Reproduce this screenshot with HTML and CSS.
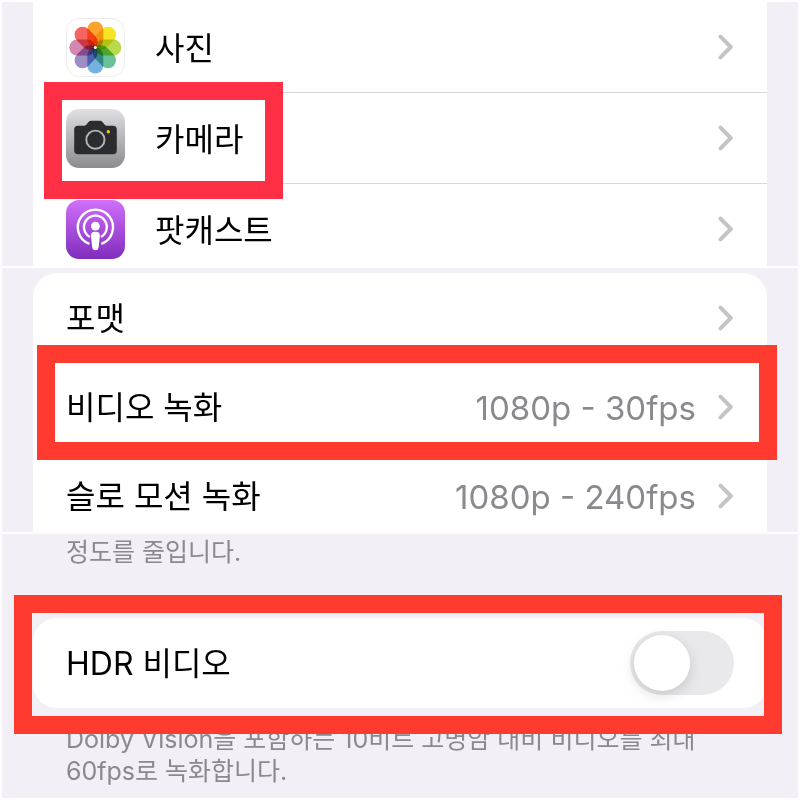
FILE: index.html
```html
<!DOCTYPE html>
<html lang="ko">

<head>
    <meta charset="UTF-8">
    <meta name="viewport" content="width=device-width, initial-scale=1.0">
    <title>카메라 설정</title>
    <link rel="stylesheet" href="styles.css">
</head>

<body>
    <!-- app list -->
    <section class="panel">
        <nav class="card apps">
            <a class="row" href="#photos">
                <svg class="app-icon" viewBox="0 0 59 59" aria-hidden="true">
                    <rect x="0.5" y="0.5" width="58" height="58" rx="13" fill="#fff" stroke="#ececee" />
                    <g class="petals" transform="translate(29.3 29.5)">
                        <rect x="-8" y="-26" width="16" height="26" rx="8" fill="#faa22e" />
                        <rect x="-8" y="-26" width="16" height="26" rx="8" fill="#f6e524" transform="rotate(45)" />
                        <rect x="-8" y="-26" width="16" height="26" rx="8" fill="#b8d94c" transform="rotate(90)" />
                        <rect x="-8" y="-26" width="16" height="26" rx="8" fill="#6bc297" transform="rotate(135)" />
                        <rect x="-8" y="-26" width="16" height="26" rx="8" fill="#74b2e0" transform="rotate(180)" />
                        <rect x="-8" y="-26" width="16" height="26" rx="8" fill="#9f8dc8" transform="rotate(225)" />
                        <rect x="-8" y="-26" width="16" height="26" rx="8" fill="#d587b1" transform="rotate(270)" />
                        <rect x="-8" y="-26" width="16" height="26" rx="8" fill="#f6665f" transform="rotate(315)" />
                    </g>
                    <circle cx="29.3" cy="29.5" r="1.5" fill="#fff" />
                </svg>
                <span class="row-body">
                    <span class="label">사진</span>
                    <svg class="chevron" viewBox="0 0 16 26" aria-hidden="true"><path d="M2.5 2.6 L12.8 13 L2.5 23.4" /></svg>
                </span>
            </a>
            <a class="row" href="#camera">
                <svg class="app-icon" viewBox="0 0 59 59" aria-hidden="true">
                    <defs>
                        <linearGradient id="silver" x1="0" y1="0" x2="0" y2="1">
                            <stop offset="0" stop-color="#e0dfe4" />
                            <stop offset="1" stop-color="#8c8b90" />
                        </linearGradient>
                    </defs>
                    <rect width="59" height="59" rx="13" fill="url(#silver)" />
                    <path d="M12 16.7 H18 Q19.5 16.7 20.5 15.5 L22.5 13 Q23.5 11.8 25 11.8 H34 Q35.5 11.8 36.5 13 L38.5 15.5 Q39.5 16.7 41 16.7 H47 Q50.8 16.7 50.8 20.5 V41.5 Q50.8 45.3 47 45.3 H12 Q8.2 45.3 8.2 41.5 V20.5 Q8.2 16.7 12 16.7 Z" fill="#2b2c2e" />
                    <circle cx="29.4" cy="30.7" r="9.1" fill="none" stroke="#b5b4b8" stroke-width="1.9" />
                    <circle cx="42.3" cy="22.8" r="1.7" fill="#fcc712" />
                </svg>
                <span class="row-body">
                    <span class="label">카메라</span>
                    <svg class="chevron" viewBox="0 0 16 26" aria-hidden="true"><path d="M2.5 2.6 L12.8 13 L2.5 23.4" /></svg>
                </span>
                <span class="mark mark-camera"></span>
            </a>
            <a class="row" href="#podcasts">
                <svg class="app-icon" viewBox="0 0 59 59" aria-hidden="true">
                    <defs>
                        <linearGradient id="purple" x1="0" y1="0" x2="0" y2="1">
                            <stop offset="0" stop-color="#d070fb" />
                            <stop offset="1" stop-color="#802cbd" />
                        </linearGradient>
                    </defs>
                    <rect width="59" height="59" rx="13" fill="url(#purple)" />
                    <g fill="none" stroke="#fff" stroke-width="2.4">
                        <path d="M23.4 43.8 A17.6 17.6 0 1 1 35.4 43.8" />
                        <path d="M23.8 37 A11.4 11.4 0 1 1 35 37" />
                    </g>
                    <circle cx="29.4" cy="26.1" r="4.4" fill="#fff" />
                    <path d="M29.4 31.8 C32.6 31.8 34 33.2 33.9 35.6 L32.7 46.5 C32.4 49.3 31.4 50.3 29.4 50.3 C27.4 50.3 26.4 49.3 26.1 46.5 L24.9 35.6 C24.8 33.2 26.2 31.8 29.4 31.8 Z" fill="#fff" />
                </svg>
                <span class="row-body">
                    <span class="label">팟캐스트</span>
                    <svg class="chevron" viewBox="0 0 16 26" aria-hidden="true"><path d="M2.5 2.6 L12.8 13 L2.5 23.4" /></svg>
                </span>
            </a>
        </nav>
    </section>

    <!-- recording formats -->
    <section class="panel">
        <nav class="card formats">
            <a class="row" href="#format">
                <span class="row-body">
                    <span class="label">포맷</span>
                    <svg class="chevron" viewBox="0 0 16 26" aria-hidden="true"><path d="M2.5 2.6 L12.8 13 L2.5 23.4" /></svg>
                </span>
            </a>
            <a class="row" href="#video">
                <span class="row-body">
                    <span class="label">비디오 녹화</span>
                    <span class="value">1080p - 30fps</span>
                    <svg class="chevron" viewBox="0 0 16 26" aria-hidden="true"><path d="M2.5 2.6 L12.8 13 L2.5 23.4" /></svg>
                </span>
                <span class="mark mark-video"></span>
            </a>
            <a class="row" href="#slomo">
                <span class="row-body">
                    <span class="label">슬로 모션 녹화</span>
                    <span class="value">1080p - 240fps</span>
                    <svg class="chevron" viewBox="0 0 16 26" aria-hidden="true"><path d="M2.5 2.6 L12.8 13 L2.5 23.4" /></svg>
                </span>
            </a>
        </nav>
    </section>

    <!-- HDR switch -->
    <section class="panel">
        <p class="note note-top">정도를 줄입니다.</p>
        <div class="card hdr">
            <div class="row">
                <div class="row-body">
                    <label class="label" for="hdr">HDR 비디오</label>
                    <input class="switch" type="checkbox" id="hdr">
                </div>
                <span class="mark mark-hdr"></span>
            </div>
        </div>
        <p class="note">Dolby Vision을 포함하는 10비트 고명암 대비 비디오를 최대 60fps로 녹화합니다.</p>
    </section>
</body>

</html>
```

FILE: styles.css
```css
* {
    box-sizing: border-box;
}

body {
    margin: 0;
    padding: 2px;
    display: grid;
    grid-template-rows: repeat(3, 1fr);
    gap: 2px;
    height: 100vh;
    background-color: #fff;
    font-family: Inter, "Noto Sans CJK KR", sans-serif;
    color: #000;
}

.panel {
    min-height: 0;
    overflow: hidden;
    padding: 0 31px;
    background-color: #f2eff7;
}

.card {
    background-color: #fff;
}

.formats {
    margin-top: 5px;
    border-radius: 24px 24px 0 0;
}

.hdr {
    margin: 50px 0 15px;
    border-radius: 24px;
}

.row {
    position: relative;
    display: flex;
    align-items: center;
    gap: 30px;
    padding-left: 33px;
    color: inherit;
    text-decoration: none;
}

.row-body {
    flex: 1;
    display: flex;
    align-items: center;
    gap: 22px;
    height: 90px;
    padding-right: 33px;
}

.apps .row-body {
    height: 91px;
    border-bottom: 1px solid #d9d9dc;
}

.formats .row-body {
    height: 89px;
}

.app-icon {
    width: 59px;
    height: 59px;
}

.petals rect {
    mix-blend-mode: multiply;
}

.label {
    flex: 1;
    padding-top: 2px;
    font-size: 32px;
    line-height: 48px;
}

.apps .label {
    padding-top: 4px;
}

.value {
    padding-top: 2px;
    font-size: 33px;
    line-height: 48px;
    color: #8a8a8e;
}

.chevron {
    width: 16px;
    height: 26px;
    fill: none;
    stroke: #c4c4c7;
    stroke-width: 4;
    stroke-linecap: round;
    stroke-linejoin: round;
}

.note {
    margin: 0;
    padding: 0 33px;
    font-size: 25px;
    line-height: 32px;
    color: #8a8a8e;
}

.note-top {
    padding-top: 2px;
}

.switch {
    appearance: none;
    width: 104px;
    height: 64px;
    margin: 0;
    padding: 4px;
    border-radius: 32px;
    background-color: #e9e9eb;
}

.switch::before {
    content: "";
    display: block;
    width: 56px;
    height: 56px;
    border-radius: 50%;
    background-color: #fff;
    box-shadow: 0 4px 14px rgba(0, 0, 0, 0.15);
}

.switch:checked {
    background-color: #34c759;
}

.switch:checked::before {
    margin-left: auto;
}

/* red frames drawn over the rows */
.mark {
    position: absolute;
    border: 18px solid #ff3b30;
    pointer-events: none;
}

.mark-camera {
    top: -11px;
    left: 11px;
    width: 239px;
    height: 117px;
    border-color: #ff3045;
}

.mark-video {
    top: -17px;
    right: -10px;
    bottom: -9px;
    left: 4px;
}

.mark-hdr {
    top: -23px;
    right: -15px;
    bottom: -26px;
    left: -19px;
}
```
